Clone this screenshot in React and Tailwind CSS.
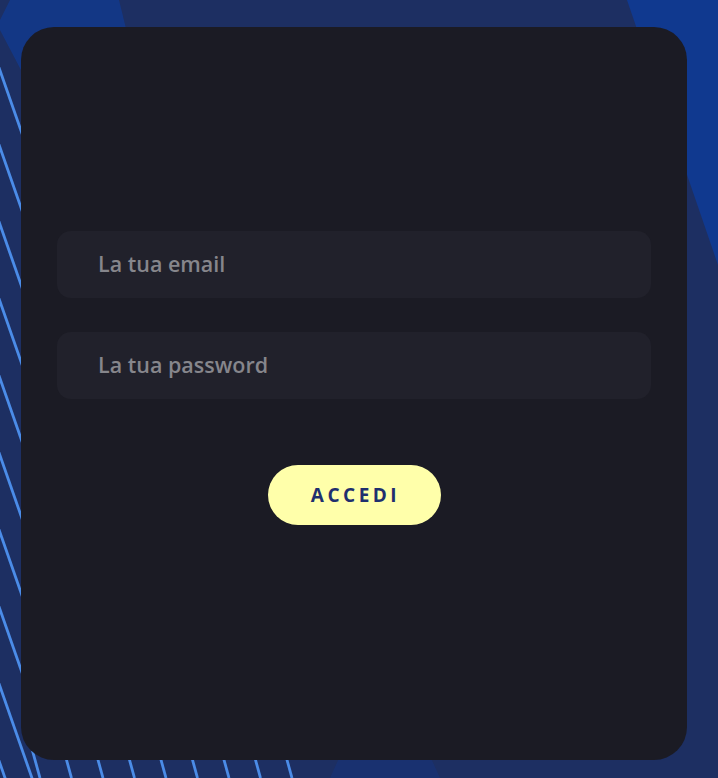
const leftLines = Array.from({ length: 11 }, (_, i) => 70 + i * 77);
const bottomLines = Array.from({ length: 9 }, (_, i) => 40 + i * 31.5);

function Backdrop() {
  return (
    <svg className="absolute inset-0 h-full w-full" viewBox="0 0 718 778">
      <rect width="718" height="778" fill="#1d2f62" />
      <polygon points="10,0 119,0 130,45 21,70 0,30 0,20" fill="#133889" opacity="0.9" />
      <polygon points="627,0 718,0 718,265" fill="#10398f" />
      <polygon points="330,778 440,778 425,745 345,745" fill="#17337a" opacity="0.6" />
      {leftLines.map((y) => (
        <line key={y} x1="-10" y1={y - 28} x2="40" y2={y + 115} stroke="#4b8ce8" strokeWidth="2.8" />
      ))}
      {bottomLines.map((x) => (
        <line key={x} x1={x - 16} y1="720" x2={x} y2="778" stroke="#4b8ce8" strokeWidth="2.8" />
      ))}
    </svg>
  );
}

export default function App() {
  return (
    <div className="relative h-[778px] w-[718px] overflow-hidden" style={{ fontFamily: '"Open Sans", "Noto Sans", sans-serif' }}>
      <Backdrop />
      <div className="relative pl-[21px] pt-[27px]">
        <div className="flex h-[733px] w-[666px] flex-col items-center rounded-[33px] bg-[#1b1b24] px-9 pt-[204px]">
          <div className="flex h-[67px] w-full items-center rounded-[14px] bg-[#21212b] pl-[41px] text-[21.5px] font-semibold text-[#86868c]">
            La tua email
          </div>
          <div className="mt-[34px] flex h-[67px] w-full items-center rounded-[14px] bg-[#21212b] pl-[41px] text-[21.5px] font-semibold text-[#86868c]">
            La tua password
          </div>
          <button className="mt-[66px] flex h-[60px] w-[173px] items-center justify-center rounded-full bg-[#ffffaa] pl-[3px] text-[19px] font-bold tracking-[3.5px] text-[#1f2f6e]">
            ACCEDI
          </button>
        </div>
      </div>
    </div>
  );
}
